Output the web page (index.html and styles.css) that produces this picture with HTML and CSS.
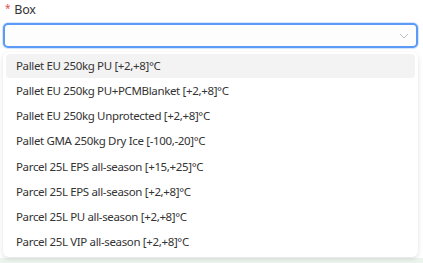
FILE: index.html
```html
<!DOCTYPE html>
<html lang="en">
<head>
    <meta charset="UTF-8">
    <meta name="viewport" content="width=device-width, initial-scale=1.0">
    <title>Box</title>
    <link rel="stylesheet" href="styles.css">
</head>
<body>
    <div class="field">
        <label class="field-label" for="box"><span class="required">*</span>Box</label>
        <div class="select">
            <div class="select-input" id="box"></div>
            <svg class="chevron" width="10" height="6" viewBox="0 0 10 6">
                <path d="M1 1 L5 5 L9 1" fill="none" stroke="#bdbdbd" stroke-width="1"/>
            </svg>
        </div>

        <ul class="dropdown">
            <li class="option active">Pallet EU 250kg PU [+2,+8]°C</li>
            <li class="option">Pallet EU 250kg PU+PCMBlanket [+2,+8]°C</li>
            <li class="option">Pallet EU 250kg Unprotected [+2,+8]°C</li>
            <li class="option">Pallet GMA 250kg Dry Ice [-100,-20]°C</li>
            <li class="option">Parcel 25L EPS all-season [+15,+25]°C</li>
            <li class="option">Parcel 25L EPS all-season [+2,+8]°C</li>
            <li class="option">Parcel 25L PU all-season [+2,+8]°C</li>
            <li class="option">Parcel 25L VIP all-season [+2,+8]°C</li>
        </ul>
    </div>

    <div class="below"></div>
</body>
</html>
```

FILE: styles.css
```css
body {
    font-family: "Noto Sans", sans-serif;
    margin: 0;
    padding: 0;
    background-color: #fff;
    color: #333;
    height: 263px;
    overflow: hidden;
}

.field {
    position: relative;
    padding: 0 5px 0 3px;
}

.field-label {
    display: block;
    font-size: 12.5px;
    line-height: 16px;
    padding: 0 0 5px 2px;
    letter-spacing: -0.2px;
}

.required {
    color: #e05050;
    font-size: 10px;
    margin-right: 4px;
    vertical-align: 2px;
}

.select {
    position: relative;
}

.select-input {
    height: 21px;
    border: 2px solid #5b9af7;
    border-radius: 5px;
    background: #fdfdfd;
    box-shadow: 0 0 0 1px #d6e6fd;
}

.chevron {
    position: absolute;
    right: 9px;
    top: 10px;
}

.dropdown {
    position: absolute;
    top: 52px;
    left: 3px;
    right: 5px;
    margin: 0;
    padding: 2px 3px 3px;
    list-style: none;
    background: #fff;
    border-radius: 6px;
    box-shadow: 0 2px 5px rgba(0, 0, 0, 0.12);
    z-index: 2;
}

.option {
    height: 24.15px;
    line-height: 24px;
    margin-bottom: 1px;
    padding-left: 10px;
    font-size: 11.5px;
    letter-spacing: -0.35px;
    border-radius: 4px;
}

.option:last-child {
    margin-bottom: 0;
}

.option.active {
    background: #f3f3f3;
}

.below {
    margin-top: 210px;
    height: 7px;
    background: #edf4ed;
}
```
